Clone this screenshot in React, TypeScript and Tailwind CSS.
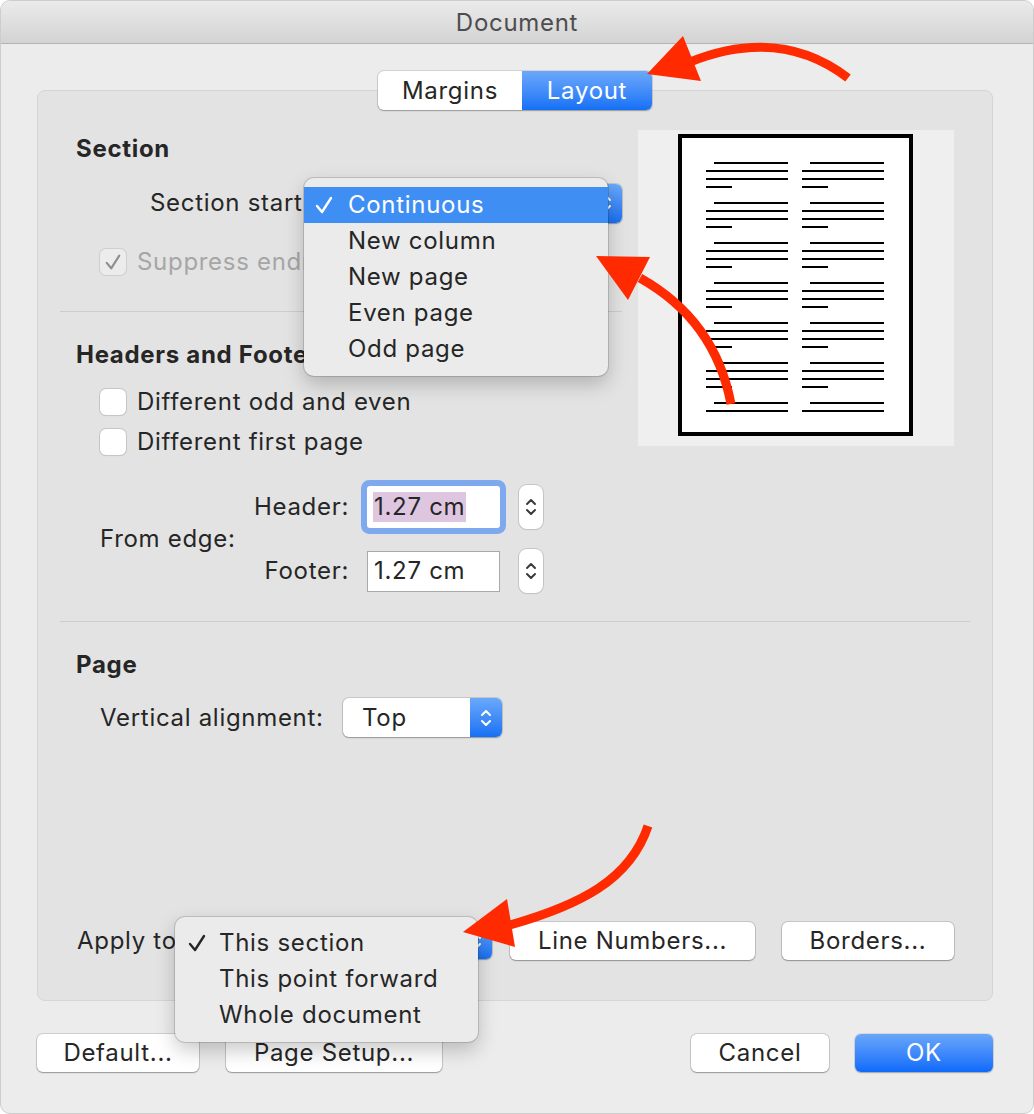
import React from 'react';

// 위/아래 화살표 (스테퍼, 팝업 버튼)
const UpDown = ({ color, w = 12, h = 22 }: { color: string; w?: number; h?: number }) => (
  <svg width={w} height={h} viewBox="0 0 12 22" fill="none">
    <path d="M2 8 L6 4 L10 8" stroke={color} strokeWidth="2" strokeLinecap="round" strokeLinejoin="round" />
    <path d="M2 14 L6 18 L10 14" stroke={color} strokeWidth="2" strokeLinecap="round" strokeLinejoin="round" />
  </svg>
);

const Check = ({ color, size = 20 }: { color: string; size?: number }) => (
  <svg width={size} height={size} viewBox="0 0 20 20" fill="none">
    <path d="M3 11 L8 17 L17 3" stroke={color} strokeWidth="2.4" strokeLinecap="round" strokeLinejoin="round" />
  </svg>
);

const Checkbox = ({ checked = false, disabled = false }: { checked?: boolean; disabled?: boolean }) => (
  <div
    className={`w-[26px] h-[26px] rounded-[6px] flex items-center justify-center ${
      disabled
        ? 'bg-[#ececec] shadow-[0_0_0_1px_#cfcfcf]'
        : 'bg-white shadow-[0_0_0_1px_#c6c6c6,0_1px_1px_rgba(0,0,0,0.12)]'
    }`}
  >
    {checked && <Check color={disabled ? '#8f8f8f' : '#333'} size={18} />}
  </div>
);

const Button = ({ label, className = '' }: { label: string; className?: string }) => (
  <div
    className={`h-[38px] flex items-center justify-center rounded-[6px] bg-white shadow-[0_0_0_1px_rgba(0,0,0,0.12),0_1px_1.5px_rgba(0,0,0,0.28)] ${className}`}
  >
    {label}
  </div>
);

const Stepper = () => (
  <div className="w-[24px] h-[44px] rounded-[8px] bg-white shadow-[0_0_0_1px_#c4c4c4,0_1px_1px_rgba(0,0,0,0.15)] flex items-center justify-center">
    <UpDown color="#3a3a3a" w={12} h={26} />
  </div>
);

// 파란 끝부분이 있는 팝업 버튼
const PopupButton = ({ value, className = '', h = 'h-[39px]' }: { value?: string; className?: string; h?: string }) => (
  <div className={`relative flex ${h} rounded-[6px] bg-white shadow-[0_0_0_1px_rgba(0,0,0,0.12),0_1px_1.5px_rgba(0,0,0,0.25)] ${className}`}>
    <div className="flex-1 flex items-center pl-[19px]">{value}</div>
    <div className="w-[32px] rounded-r-[6px] bg-gradient-to-b from-[#6aa8fa] to-[#1470f5] flex items-center justify-center">
      <UpDown color="#ffffff" w={12} h={24} />
    </div>
  </div>
);

const PreviewPage = () => {
  const groups = [33, 73, 113, 153, 193, 233, 273];
  const cols = [68, 164];
  return (
    <svg width="316" height="316" viewBox="0 0 316 316">
      <rect x="42" y="6" width="231" height="298" fill="#fff" stroke="#000" strokeWidth="4" />
      {groups.map((y, gi) =>
        cols.map((x) => {
          const last = gi === groups.length - 1;
          return (
            <g key={`${gi}-${x}`} fill="#000">
              <rect x={x + 8} y={y - 1} width={74} height={2} />
              <rect x={x} y={y + 7} width={82} height={2} />
              {!last && <rect x={x} y={y + 15} width={82} height={2} />}
              {!last && <rect x={x} y={y + 23} width={26} height={2} />}
            </g>
          );
        })
      )}
    </svg>
  );
};

export default function App() {
  return (
    <div className="relative w-[1034px] h-[1114px] bg-white font-['Inter','Liberation_Sans',sans-serif] text-[24px] leading-[30px] tracking-[0.7px] text-[#262626]">
      <div className="w-full h-full bg-[#ececec] rounded-[10px] border border-[#cdcdcd] overflow-hidden">
        {/* 타이틀 바 */}
        <div className="h-[43px] flex items-center justify-center bg-gradient-to-b from-[#ebebeb] to-[#d3d3d3] border-b border-[#b4b4b4] text-[#4d4d4d] pt-[2px]">
          Document
        </div>

        <div className="pl-[36px] pt-[27px]">
          {/* 탭 */}
          <div className="relative z-10 w-[956px] flex justify-center">
            <div className="flex h-[39px] rounded-[6px] bg-white shadow-[0_0_0_1px_rgba(0,0,0,0.1),0_1px_1.5px_rgba(0,0,0,0.25)]">
              <div className="w-[144px] flex items-center justify-center">Margins</div>
              <div className="w-[130px] flex items-center justify-center rounded-r-[6px] bg-gradient-to-b from-[#6ba8fa] to-[#1270f6] text-white">
                Layout
              </div>
            </div>
          </div>

          {/* 패널 */}
          <div className="-mt-[20px] w-[956px] h-[911px] rounded-[8px] bg-[#e3e3e3] border border-[#d5d5d5] px-[22px] pt-[39px] pb-[40px] flex flex-col">
            <div className="flex items-start gap-[16px]">
              <div className="w-[562px] flex flex-col">
                <div className="mt-[4px] h-[30px] pl-[16px] font-bold">Section</div>

                <div className="mt-[19px] h-[40px] flex items-center justify-between">
                  <div className="pl-[90px] whitespace-nowrap">Section start:</div>
                  <div className="relative w-[308px] shrink-0">
                    <PopupButton />
                    {/* 섹션 시작 메뉴 */}
                    <div className="absolute z-20 -left-[10px] -top-[6px] w-[304px] h-[198px] rounded-[10px] bg-[#ebebeb] shadow-[0_0_0_1px_rgba(0,0,0,0.14),0_8px_20px_rgba(0,0,0,0.22)] py-[9px]">
                      <div className="h-[36px] flex items-center bg-[#3f8ef3] text-white">
                        <div className="w-[44px] flex justify-start pl-[10px]">
                          <Check color="#ffffff" />
                        </div>
                        <span>Continuous</span>
                      </div>
                      {['New column', 'New page', 'Even page', 'Odd page'].map((t) => (
                        <div key={t} className="h-[36px] flex items-center pl-[44px]">
                          {t}
                        </div>
                      ))}
                    </div>
                  </div>
                </div>

                <div className="mt-[24px] h-[30px] flex items-center pl-[40px] gap-[11px] whitespace-nowrap">
                  <Checkbox checked disabled />
                  <span className="text-[#a6a6a6]">Suppress endnotes</span>
                </div>

                <div className="mt-[34px] h-px bg-[#cdcdcd]" />

                <div className="mt-[28px] h-[30px] pl-[16px] font-bold whitespace-nowrap">Headers and Footers</div>

                <div className="mt-[17px] h-[30px] flex items-center pl-[40px] gap-[11px]">
                  <Checkbox />
                  <span>Different odd and even</span>
                </div>
                <div className="mt-[10px] h-[30px] flex items-center pl-[40px] gap-[11px]">
                  <Checkbox />
                  <span>Different first page</span>
                </div>

                {/* 머리글/바닥글 간격 */}
                <div className="mt-[29px] flex items-center pl-[40px]">
                  <div className="w-[145px] whitespace-nowrap">From edge:</div>
                  <div className="flex flex-col gap-[22px]">
                    <div className="flex items-center h-[42px]">
                      <div className="w-[104px] text-right">Header:</div>
                      <div className="ml-[18px] w-[133px] h-[42px] bg-white rounded-[3px] shadow-[0_0_0_6px_#7fa9ee] flex items-center pl-[6px]">
                        <span className="bg-[#dfc6e0] px-[1px]">1.27 cm</span>
                      </div>
                      <div className="ml-[19px]">
                        <Stepper />
                      </div>
                    </div>
                    <div className="flex items-center h-[42px]">
                      <div className="w-[104px] text-right">Footer:</div>
                      <div className="ml-[18px] w-[133px] h-[41px] bg-white border border-[#a9a9a9] flex items-center pl-[6px]">
                        1.27 cm
                      </div>
                      <div className="ml-[19px]">
                        <Stepper />
                      </div>
                    </div>
                  </div>
                </div>
              </div>

              {/* 미리보기 */}
              <div className="w-[316px] h-[316px] bg-[#efefef]">
                <PreviewPage />
              </div>
            </div>

            <div className="mt-[29px] h-px bg-[#cdcdcd]" />

            <div className="mt-[28px] h-[30px] pl-[16px] font-bold">Page</div>
            <div className="mt-[18px] h-[39px] flex items-center pl-[40px]">
              <div className="w-[243px] whitespace-nowrap">Vertical alignment:</div>
              <PopupButton value="Top" className="w-[159px]" />
            </div>

            {/* 적용 범위 + 버튼 */}
            <div className="mt-auto h-[38px] flex items-center">
              <div className="ml-[17px] w-[107px] whitespace-nowrap">Apply to:</div>
              <div className="relative w-[308px]">
                <PopupButton h="h-[36px]" />
                <div className="absolute z-20 -left-[9px] -top-[6px] w-[303px] h-[125px] rounded-[10px] bg-[#ebebeb] shadow-[0_0_0_1px_rgba(0,0,0,0.14),0_8px_20px_rgba(0,0,0,0.22)] pt-[8px]">
                  <div className="h-[36px] flex items-center">
                    <div className="w-[44px] flex justify-start pl-[12px]">
                      <Check color="#262626" />
                    </div>
                    <span>This section</span>
                  </div>
                  <div className="h-[36px] flex items-center pl-[44px]">This point forward</div>
                  <div className="h-[36px] flex items-center pl-[44px]">Whole document</div>
                </div>
              </div>
              <Button label="Line Numbers..." className="ml-[18px] w-[245px]" />
              <Button label="Borders..." className="ml-[27px] w-[172px]" />
            </div>
          </div>

          {/* 하단 버튼 */}
          <div className="mt-[33px] w-[956px] flex justify-between">
            <div className="flex">
              <Button label="Default..." className="w-[162px]" />
              <Button label="Page Setup..." className="ml-[27px] w-[216px]" />
            </div>
            <div className="flex">
              <Button label="Cancel" className="w-[138px]" />
              <div className="ml-[26px] w-[138px] h-[38px] flex items-center justify-center rounded-[6px] bg-gradient-to-b from-[#69a6fa] to-[#0b69fb] text-white shadow-[0_0_0_1px_rgba(0,0,0,0.08),0_1px_1.5px_rgba(0,0,0,0.25)]">
                OK
              </div>
            </div>
          </div>
        </div>
      </div>

      {/* 빨간 화살표 주석 */}
      <svg className="absolute inset-0 z-30 pointer-events-none" width="1034" height="1114" viewBox="0 0 1034 1114">
        <g fill="none" stroke="#ff2a00" strokeWidth="9">
          <path d="M848 78 Q780 26 690 62" />
          <path d="M731 404 Q715 320 640 278" />
          <path d="M648 826 C630 880 580 905 510 925" />
        </g>
        <g fill="#ff2a00">
          <polygon points="647,74 683,36 701,81" />
          <polygon points="596,256 650,257 628,300" />
          <polygon points="463,932 507,899 515,947" />
        </g>
      </svg>
    </div>
  );
}
